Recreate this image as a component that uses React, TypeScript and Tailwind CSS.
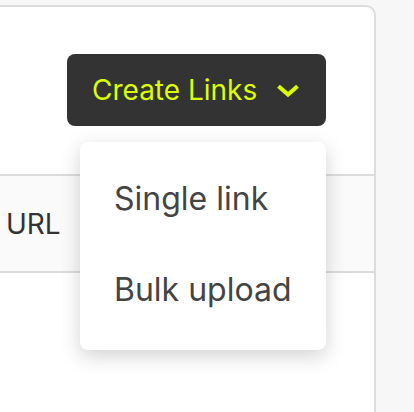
import React from 'react';

const Chevron = () => (
  <svg width="22" height="14" viewBox="0 0 22 14" fill="none">
    <path d="M3 3.5 L11 10.5 L19 3.5" stroke="#dcff00" strokeWidth="4" strokeLinecap="square" />
  </svg>
);

const App = () => {
  return (
    <div className="w-[414px] h-[412px] bg-[#f7f7f7] pt-[5px] overflow-hidden" style={{ fontFamily: 'Inter, "Noto Sans", sans-serif' }}>
      <div className="w-[386px] h-[420px] -ml-[10px] bg-white border-2 border-[#dcdcdc] rounded-tr-[10px] flex flex-col">
        <div className="flex justify-end pr-[48px] pt-[47px]">
          <div className="relative">
            <button className="w-[259px] h-[72px] bg-[#333333] rounded-[8px] flex items-center pl-[25px] text-[#dcff00] text-[28px]">
              <span>Create Links</span>
              <span className="ml-[20px] mt-[1px]"><Chevron /></span>
            </button>
            <div className="absolute right-0 top-[88px] w-[246px] h-[208px] bg-white rounded-[8px] shadow-[0_6px_20px_rgba(0,0,0,0.18)] z-10 flex flex-col pl-[34px] text-[#444444] text-[32px]">
              <div className="h-[104px] flex items-center pt-[10px]">Single link</div>
              <div className="h-[104px] flex items-start pt-[20px]">Bulk upload</div>
            </div>
          </div>
        </div>
        <div className="mt-[48px] h-[99px] border-y-2 border-[#dcdcdc] bg-[#fafafa] flex items-center pl-[14px] text-[#333333] text-[28px]">
          URL
        </div>
      </div>
    </div>
  );
};

export default App;
